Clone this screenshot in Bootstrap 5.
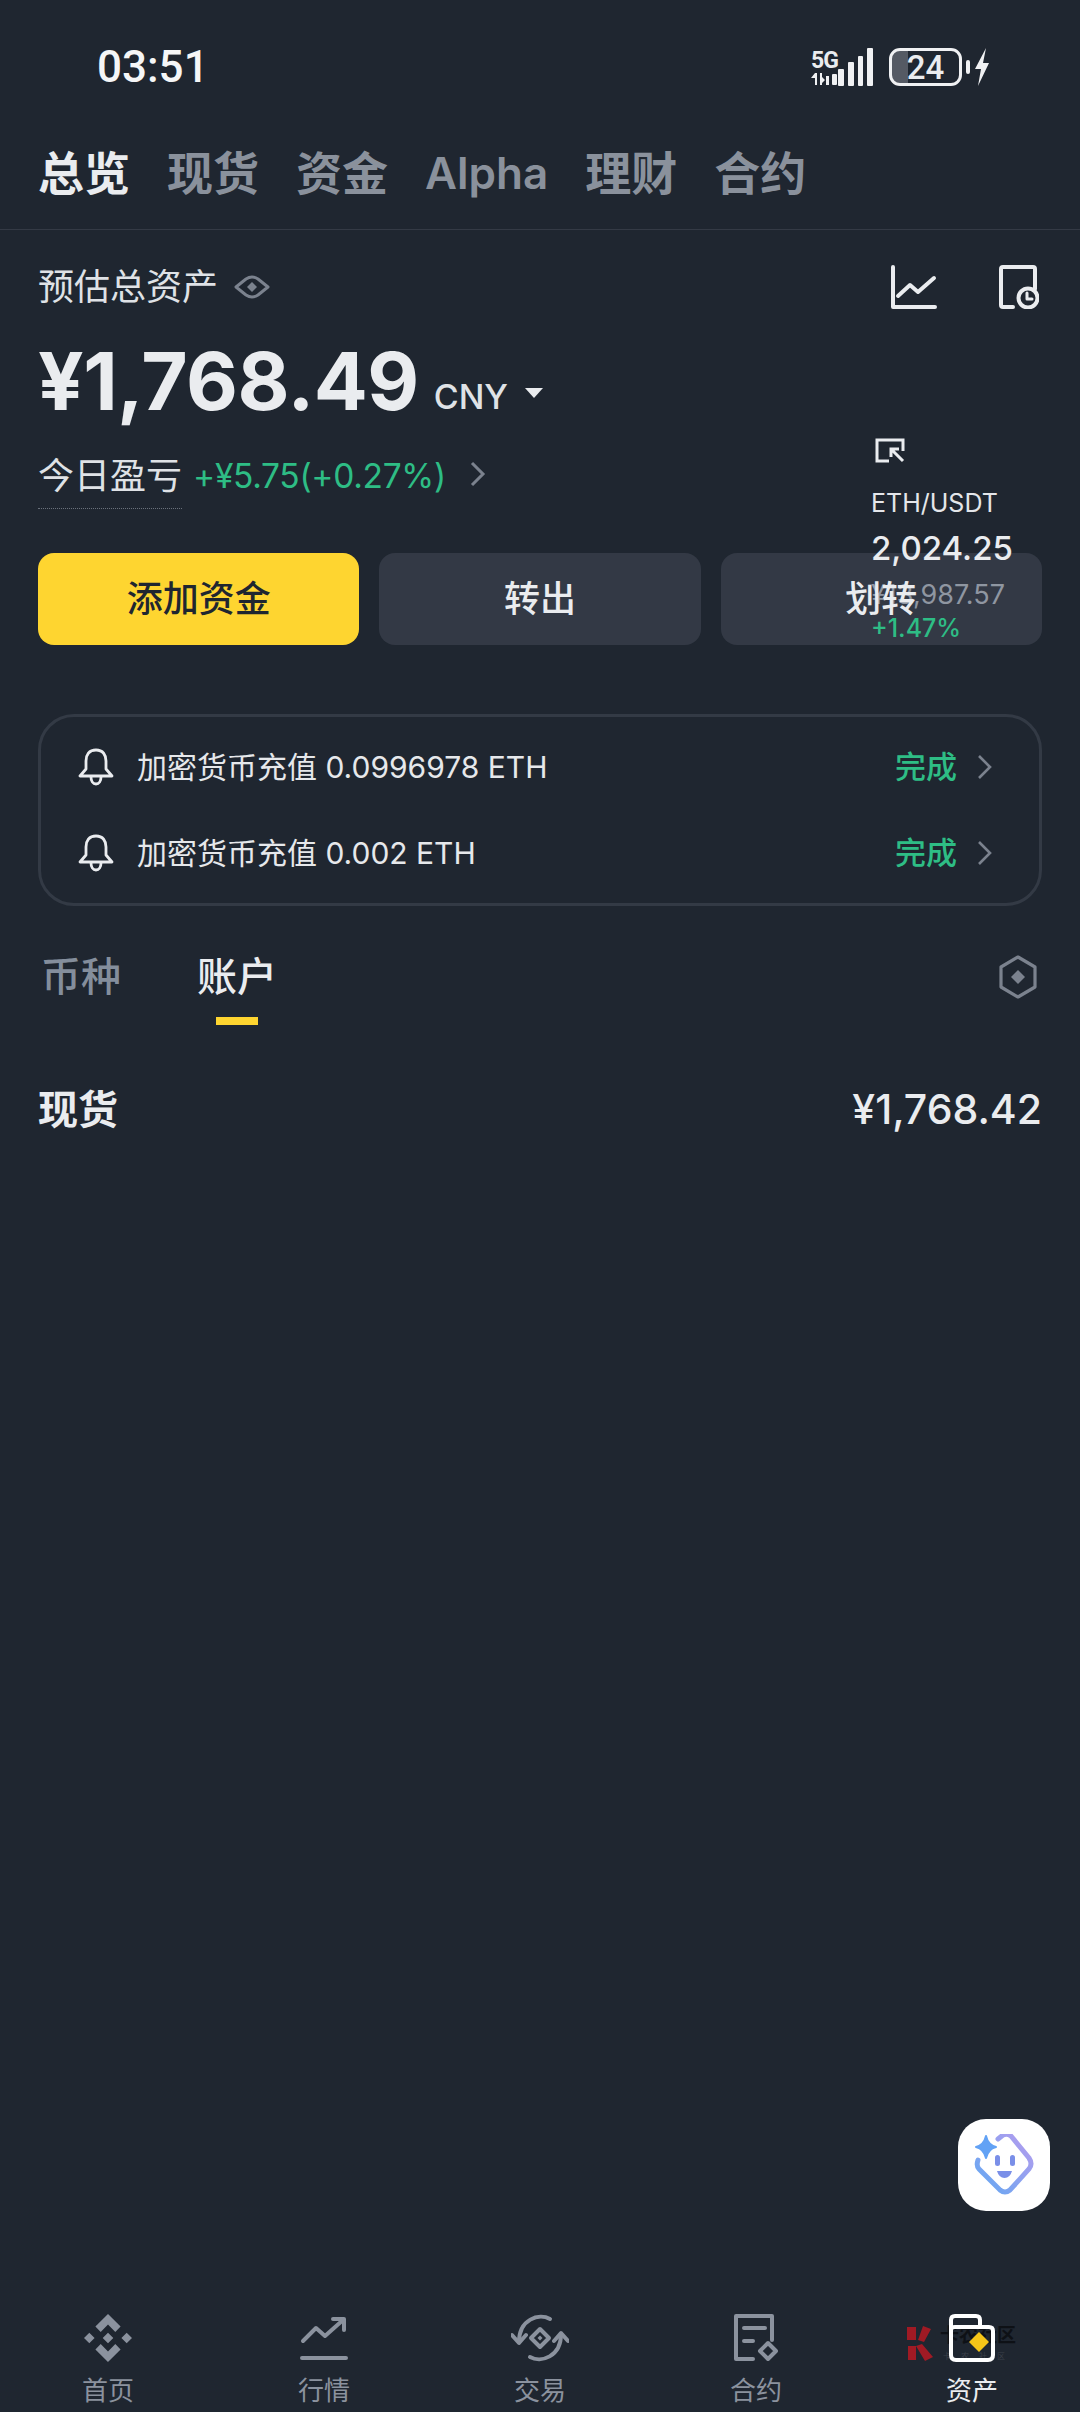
<!DOCTYPE html>
<html lang="zh-CN">
<head>
    <meta charset="UTF-8">
    <meta name="viewport" content="width=device-width, initial-scale=1.0">
    <title>资产总览</title>
    <link href="https://cdn.jsdelivr.net/npm/bootstrap@5.3.0/dist/css/bootstrap.min.css" rel="stylesheet">
    <style>
        body {
            background-color: #1f2630;
            color: #eaecef;
            font-family: "Inter", "Noto Sans CJK SC", sans-serif;
        }
        .app-page { position: relative; width: 1080px; height: 2412px; overflow: hidden; }

        /* status bar */
        .status-row { height: 125px; padding: 9px 90px 0 97px; }
        .status-time { font-family: "Roboto", sans-serif; font-weight: 500; font-size: 44px; line-height: 1; color: #f5f6f7; }
        .status-five { font-family: "Roboto", sans-serif; font-weight: 700; font-size: 23px; line-height: 1; letter-spacing: -1px; }
        .status-batt { width: 73px; height: 38px; border: 3px solid #f0f1f3; border-radius: 11px; font-family: "Roboto", sans-serif; font-size: 33px; font-weight: 500; line-height: 1; background: linear-gradient(90deg, #555a64 24%, transparent 24%); }
        .status-tip { width: 4px; height: 14px; background: #f0f1f3; border-radius: 2px; }

        /* top tabs */
        .top-tabs { height: 105px; padding: 0 38px 8px; gap: 37px; border-bottom: 1px solid #343a45; align-items: center; }
        .top-tab { font-size: 46px; line-height: 1; font-weight: 600; color: #8a919c; white-space: nowrap; }
        .top-tab.on { color: #eaecef; font-weight: 700; }
        .top-tab.latin { font-size: 44px; }

        /* balance */
        .assets-wrap { padding: 0 38px; }
        .assets-label { font-size: 36px; line-height: 1; color: #dfe2e6; }
        .assets-head { height: 113px; }
        .head-gap { margin-left: 62px; margin-right: 3px; }
        .assets-num { font-size: 80px; line-height: 1; font-weight: 700; color: #eaecef; letter-spacing: -0.5px; }
        .assets-unit { font-size: 34px; line-height: 1; font-weight: 500; color: #dfe2e6; margin-left: 15px; position: relative; top: 3px; }
        .assets-caret { width: 0; height: 0; border-left: 9px solid transparent; border-right: 9px solid transparent; border-top: 10px solid #eaecef; margin-left: 17px; position: relative; top: 12px; }
        .balance-line { height: 76px; }
        .pnl-line { height: 78px; margin-top: 25px; }
        .pnl-label { font-size: 36px; line-height: 1; color: #dfe2e6; padding-bottom: 14px; border-bottom: 1px dotted #6a717c; margin-top: 14px; }
        .pnl-value { font-size: 33.5px; color: #2ebd85; line-height: 1; margin-left: 11px; letter-spacing: -0.3px; }
        .act-row { margin-top: 31px; gap: 20px; }
        .act-btn { flex: 1 1 0; height: 92px; border: 0; border-radius: 16px; font-size: 36px; font-weight: 500; color: #eaecef; background-color: #333945; padding: 0; }
        .act-btn:hover { background-color: #333945; color: #eaecef; }
        .act-btn.prime, .act-btn.prime:hover { background-color: #fed530; color: #1f2630; }

        /* price float */
        .price-float { position: absolute; left: 871px; top: 438px; z-index: 1; line-height: 1; }
        .price-pair { font-size: 25px; margin-top: 28px; color: #e4e6ea; }
        .price-last { font-size: 33px; font-weight: 500; margin-top: 16px; }
        .price-fiat { font-size: 27px; margin-top: 16px; color: #8f96a1; }
        .price-change { font-size: 25px; margin-top: 8px; color: #2ebd85; font-weight: 500; }
        .act-btn span { position: relative; z-index: 2; }

        /* notices */
        .notice-box { margin-top: 69px; height: 192px; border: 3px solid #333a45; border-radius: 36px; padding: 0 46px 0 37px; }
        .notice-item { height: 86px; }
        .notice-text { font-size: 30px; margin-left: 23px; color: #e6e8eb; }
        .notice-ok { font-size: 31px; font-weight: 500; color: #2ebd85; margin-right: 20px; }

        /* account tabs */
        .acc-tabs { margin-top: 30px; height: 82px; }
        .acc-tab { font-size: 40px; line-height: 1; color: #848e9c; font-weight: 500; position: relative; }
        .acc-tab.on { color: #eaecef; margin-left: 76px; }
        .acc-tab.on::after { content: ""; position: absolute; left: 19px; top: 60px; width: 42px; height: 8px; background: #fed530; }
        .acc-first { margin-left: 3px; }
        .acc-line { margin-top: 71px; }
        .acc-name { font-size: 40px; font-weight: 600; line-height: 1; }
        .acc-sum { font-size: 41px; font-weight: 500; line-height: 1; }

        /* helper */
        .help-float { position: absolute; left: 958px; top: 2119px; width: 92px; height: 92px; background: #fff; border-radius: 28px; }

        /* bottom nav */
        .bottom-bar { position: absolute; left: 0; bottom: 0; width: 100%; height: 98px; }
        .bottom-item { width: 216px; font-size: 26px; line-height: 1; color: #8b929e; gap: 16px; }
        .bottom-item.on { color: #eaecef; }
        .water-mark { position: absolute; left: 905px; top: 2325px; z-index: 0; }
        .water-text { font-size: 19px; font-weight: 700; color: #0e1116; line-height: 1; position: absolute; left: 35px; top: 1px; white-space: nowrap; }
        .water-sub { font-size: 8px; color: #3b4049; position: absolute; left: 38px; top: 25px; white-space: nowrap; letter-spacing: 10px; }
        .bottom-icon { position: relative; z-index: 1; }
    </style>
</head>
<body>
    <div class="app-page">
        <!-- status bar -->
        <div class="status-row d-flex justify-content-between align-items-center">
            <div class="status-time">03:51</div>
            <div class="d-flex align-items-center">
                <div class="d-flex align-items-end">
                    <div>
                        <div class="status-five">5G</div>
                        <svg width="27" height="14" viewBox="0 0 27 14" class="d-block" fill="#f0f1f3"><path d="M0 6 4 1h2v12H4V6H0zM9 1h2v4l3 3-3 3v2H9z"/><rect x="15" y="4" width="3" height="9"/><rect x="21" y="2" width="5" height="11" rx="1"/></svg>
                    </div>
                    <svg width="35" height="38" viewBox="0 0 35 38" fill="#f0f1f3"><rect x="0" y="21" width="6" height="17" rx="1"/><rect x="10" y="14" width="6" height="24" rx="1"/><rect x="20" y="8" width="5" height="30" rx="1"/><rect x="29" y="0" width="6" height="38" rx="1"/></svg>
                </div>
                <div class="status-batt d-flex justify-content-center align-items-center ms-3">24</div>
                <div class="status-tip ms-1"></div>
                <svg class="ms-1" width="16" height="38" viewBox="0 0 16 38" fill="#f0f1f3"><path d="M12 0 1 21h6L4 38l11-23H9z"/></svg>
            </div>
        </div>

        <!-- top tabs -->
        <div class="top-tabs d-flex">
            <div class="top-tab on">总览</div>
            <div class="top-tab">现货</div>
            <div class="top-tab">资金</div>
            <div class="top-tab latin">Alpha</div>
            <div class="top-tab">理财</div>
            <div class="top-tab">合约</div>
        </div>

        <div class="assets-wrap">
            <div class="assets-head d-flex justify-content-between align-items-center">
                <div class="d-flex align-items-center">
                    <span class="assets-label">预估总资产</span>
                    <svg class="ms-3" width="36" height="24" viewBox="0 0 36 24" fill="none" stroke="#7b828e" stroke-width="3"><path d="M2 12 12 4Q18 0 24 4L34 12 24 20Q18 24 12 20z" stroke-linejoin="round"/><path d="M18 7l5 5-5 5-5-5z" fill="#7b828e" stroke="none"/></svg>
                </div>
                <div class="d-flex align-items-center">
                    <svg width="46" height="44" viewBox="0 0 46 44" fill="none" stroke="#eaecef" stroke-width="4" stroke-linecap="round" stroke-linejoin="round"><path d="M2 2v40h42"/><path d="M7 31l12-11 8 7 16-14"/></svg>
                    <svg class="head-gap" width="40" height="44" viewBox="0 0 40 44" fill="none" stroke="#eaecef" stroke-width="4" stroke-linecap="round" stroke-linejoin="round"><path d="M14 42H4Q2 42 2 40V4Q2 2 4 2H34Q36 2 36 4V24"/><circle cx="29" cy="33" r="9.500"/><path d="M28 28v6h5" stroke-width="3"/></svg>
                </div>
            </div>
            <div class="balance-line d-flex align-items-center">
                <span class="assets-num">¥1,768.49</span>
                <span class="assets-unit align-self-end mb-2">CNY</span>
                <span class="assets-caret"></span>
            </div>
            <div class="pnl-line d-flex align-items-start">
                <span class="pnl-label">今日盈亏</span>
                <span class="pnl-value mt-3">+¥5.75(+0.27%)</span>
                <svg class="mt-3 ms-4" width="16" height="28" viewBox="0 0 16 28" fill="none" stroke="#7b828e" stroke-width="3"><path d="M2 3l11 11L2 25"/></svg>
            </div>
            <div class="act-row d-flex">
                <button type="button" class="btn act-btn prime"><span>添加资金</span></button>
                <button type="button" class="btn act-btn"><span>转出</span></button>
                <button type="button" class="btn act-btn"><span>划转</span></button>
            </div>

            <div class="notice-box d-flex flex-column justify-content-center">
                <div class="notice-item d-flex align-items-center">
                    <svg width="36" height="38" viewBox="0 0 36 38" fill="none" stroke="#eaecef" stroke-width="2.800"><path d="M18 2C11 2 8 7 8 13v8l-6 7h32l-6-7v-8c0-6-3-11-10-11z" stroke-linejoin="round"/><path d="M13 29c0 4 2 7 5 7s5-3 5-7"/></svg>
                    <span class="notice-text">加密货币充值 0.0996978 ETH</span>
                    <span class="notice-ok ms-auto">完成</span>
                    <svg width="16" height="26" viewBox="0 0 16 26" fill="none" stroke="#7b828e" stroke-width="2.600"><path d="M2 2l11 11L2 24"/></svg>
                </div>
                <div class="notice-item d-flex align-items-center">
                    <svg width="36" height="38" viewBox="0 0 36 38" fill="none" stroke="#eaecef" stroke-width="2.800"><path d="M18 2C11 2 8 7 8 13v8l-6 7h32l-6-7v-8c0-6-3-11-10-11z" stroke-linejoin="round"/><path d="M13 29c0 4 2 7 5 7s5-3 5-7"/></svg>
                    <span class="notice-text">加密货币充值 0.002 ETH</span>
                    <span class="notice-ok ms-auto">完成</span>
                    <svg width="16" height="26" viewBox="0 0 16 26" fill="none" stroke="#7b828e" stroke-width="2.600"><path d="M2 2l11 11L2 24"/></svg>
                </div>
            </div>

            <div class="acc-tabs d-flex align-items-center">
                <span class="acc-tab acc-first">币种</span>
                <span class="acc-tab on">账户</span>
                <svg class="ms-auto me-1" width="40" height="44" viewBox="0 0 40 44" fill="none" stroke="#7b828e" stroke-width="3.200"><path d="M20 2 37 12v20L20 42 3 32V12z" stroke-linejoin="round"/><path d="M20 15l7 7-7 7-7-7z" fill="#7b828e" stroke="none"/></svg>
            </div>
            <div class="acc-line d-flex justify-content-between align-items-center">
                <span class="acc-name">现货</span>
                <span class="acc-sum">¥1,768.42</span>
            </div>
        </div>

        <!-- floating price window -->
        <div class="price-float">
            <svg class="d-block ms-1" width="30" height="25" viewBox="0 0 30 25" fill="none" stroke="#eaecef" stroke-width="3"><path d="M14 23H2V2h26v11"/><path d="M28 23 16 11m0 8v-8h8"/></svg>
            <div class="price-pair">ETH/USDT</div>
            <div class="price-last">2,024.25</div>
            <div class="price-fiat">¥13,987.57</div>
            <div class="price-change">+1.47%</div>
        </div>

        <!-- helper button -->
        <div class="help-float d-flex justify-content-center align-items-center">
            <svg width="60" height="62" viewBox="0 0 60 62">
                <defs><linearGradient id="helpGrad" x1="0" y1="1" x2="1" y2="0"><stop offset="0" stop-color="#62a8f2"/><stop offset="1" stop-color="#b79cee"/></linearGradient></defs>
                <path d="M24 5 29 1q4-2 8 1L55 24q4 6 0 11L36 56q-5 4-10 0L5 35q-3-3-1-9" fill="none" stroke="url(#helpGrad)" stroke-width="5" stroke-linecap="round"/>
                <path d="M12 2q2 9 10 11-8 2-10 11-2-9-10-11 8-2 10-11z" fill="#62a2f5" stroke="#62a2f5" stroke-width="2" stroke-linejoin="round"/>
                <rect x="21" y="21" width="5" height="11" rx="2.500" fill="#7a8fe8"/>
                <rect x="36" y="21" width="5" height="11" rx="2.500" fill="#7a8fe8"/>
                <path d="M23 37h15q-2 7-7.500 7T23 37z" fill="#7a8fe8"/>
            </svg>
        </div>

        <!-- bottom nav -->
        <div class="water-mark">
            <svg width="29" height="36" viewBox="0 0 29 36" fill="#a01a24"><path d="M2 2h9v13H2zM18 1l8 3-7 13-6-2zM3 21h8v14H3zM11 21l6-2 11 13-8 4z"/></svg>
            <span class="water-text">卡农社区</span>
            <span class="water-sub">卡农社区</span>
        </div>
        <div class="bottom-bar d-flex justify-content-center align-items-start">
            <div class="bottom-item d-flex flex-column align-items-center">
                <svg class="bottom-icon" width="48" height="48" viewBox="0 0 48 48" fill="#8b929e"><path d="M24 0 36.600 12.600 31.300 17.900 24 10.600 16.700 17.900 11.400 12.600zM24 48 36.600 35.400 31.300 30.100 24 37.400 16.700 30.100 11.400 35.400zM0 24 5.300 18.700 10.600 24 5.300 29.300zM48 24 42.700 18.700 37.400 24 42.700 29.300zM24 18.700 29.300 24 24 29.300 18.700 24z"/></svg>
                <span>首页</span>
            </div>
            <div class="bottom-item d-flex flex-column align-items-center">
                <svg class="bottom-icon" width="48" height="48" viewBox="0 0 48 48" fill="none" stroke="#8b929e" stroke-width="4" stroke-linecap="round" stroke-linejoin="round"><path d="M2 44h44"/><path d="M3 27l13-13 9 8 18-16"/><path d="M33 5h11v11"/></svg>
                <span>行情</span>
            </div>
            <div class="bottom-item d-flex flex-column align-items-center">
                <svg class="bottom-icon" width="58" height="48" viewBox="0 0 58 48" fill="none" stroke="#8b929e" stroke-width="4" stroke-linecap="round" stroke-linejoin="round"><path d="M39 5C28-1 8 5 8 28"/><path d="M19 43C30 49 50 43 50 20"/><path d="M1 21l7 8 7-8M43 27l7-8 7 8"/><path d="M29 15l9 9-9 9-9-9z"/><path d="M29 21.500l2.500 2.500-2.500 2.500-2.500-2.500z" fill="#8b929e" stroke="none"/></svg>
                <span>交易</span>
            </div>
            <div class="bottom-item d-flex flex-column align-items-center">
                <svg class="bottom-icon" width="44" height="48" viewBox="0 0 44 48" fill="none" stroke="#8b929e" stroke-width="4" stroke-linecap="round" stroke-linejoin="round"><path d="M19 45H2V2h36v24"/><path d="M10 14h21M10 27h9"/><path d="M34 29l8 8-8 8-8-8z" fill="#1f2630"/></svg>
                <span>合约</span>
            </div>
            <div class="bottom-item on d-flex flex-column align-items-center">
                <svg class="bottom-icon" width="48" height="48" viewBox="0 0 48 48" fill="none"><path d="M3 16V6q0-4 4-4h21q4 0 4 4v7M3 16v25q0 5 5 5h32q5 0 5-5V17q0-4-4-4H7q-4 0-4 3z" stroke="#fff" stroke-width="4"/><path d="M31 18l10 10-10 10-10-10z" fill="#f5c518"/></svg>
                <span>资产</span>
            </div>
        </div>
    </div>
    <script src="https://cdn.jsdelivr.net/npm/bootstrap@5.3.0/dist/js/bootstrap.bundle.min.js"></script>
</body>
</html>
